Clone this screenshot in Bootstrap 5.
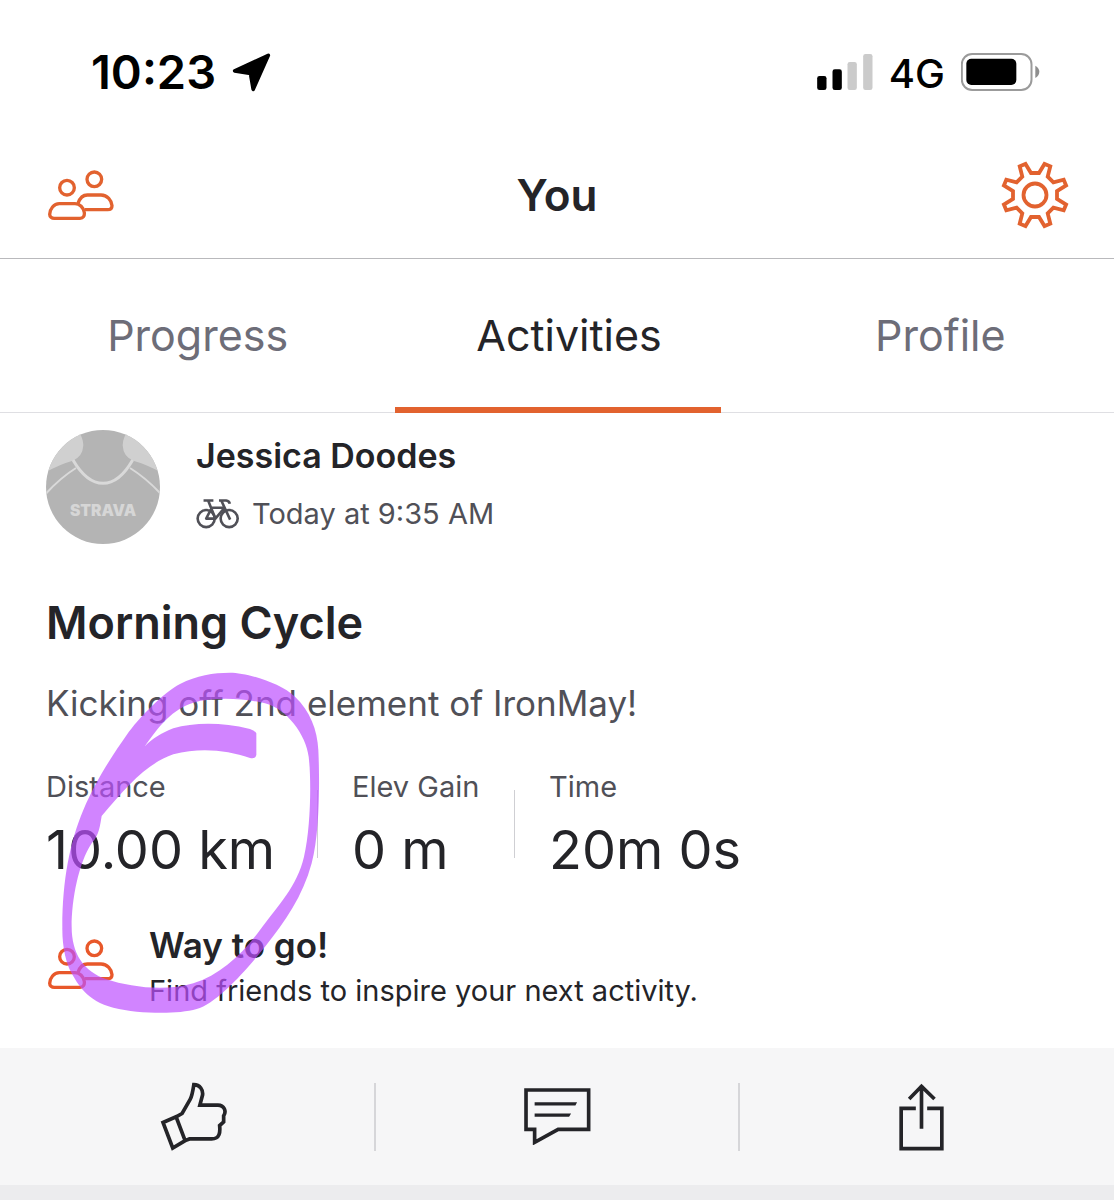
<!DOCTYPE html>
<html lang="en">
<head>
<meta charset="utf-8">
<meta name="viewport" content="width=device-width, initial-scale=1">
<title>You – Activities</title>
<link href="https://cdn.jsdelivr.net/npm/bootstrap@5.3.0/dist/css/bootstrap.min.css" rel="stylesheet">
<style>
:root{--ink:#242428;--soft:#505057;--brand:#e2622f;}
body{font-family:Inter,"Liberation Sans",sans-serif;color:var(--ink);background:#ececee;font-weight:400;}
svg{display:block;flex:none;}
.icon-btn{border:0;padding:0;background:none;color:var(--brand);}
.status{height:144px;padding:0 74px 0 91px;color:#000;}
.clock{font-size:47px;font-weight:600;line-height:56px;}
.carrier{font-size:40px;font-weight:500;line-height:48px;}
.topbar{height:115px;padding:0 44px 12px 48px;border-bottom:1px solid #b9b9bc;}
.topbar h1{font-size:44px;line-height:56px;font-weight:600;}
.tabs{height:154px;border-bottom:1px solid #dfdfe3;padding-left:12px;margin-right:-12px;}
.tabs a{flex:1 1 0;font-size:43px;line-height:56px;color:#6d6d78;text-decoration:none;text-align:center;padding-top:48px;position:relative;}
.tabs a.active{color:var(--ink);}
.tabs a.active::after{content:"";position:absolute;left:12px;right:34px;bottom:-1px;height:6px;background:var(--brand);}
.entry{padding:17px 46px 35px;}
.who{font-size:34px;line-height:44px;font-weight:600;}
.when{font-size:29px;line-height:40px;color:var(--soft);}
.entry h3{font-size:45px;line-height:56px;font-weight:600;margin:51px 0 0;}
.note{font-size:35px;line-height:44px;color:var(--soft);margin:30px 0 0;}
.stats{margin-top:42px;}
.stats dt{font-size:29px;line-height:40px;font-weight:400;color:var(--soft);}
.stats dd{font-size:54px;line-height:64px;margin:11px 0 0;}
.stat-a{width:271px;}
.stat-b{width:162px;}
.rule{width:1px;height:68px;background:#cfcfd3;margin:23px 34px 0 0;}
.cheer{margin-top:39px;gap:35px;}
.cheer svg{margin:0 0 6px 2px;}
.cheer strong{display:block;font-size:35px;line-height:48px;font-weight:600;}
.cheer span{display:block;font-size:29px;line-height:44px;}
.scribble{position:absolute;left:30px;top:247px;pointer-events:none;}
.actions{background:#f6f6f7;height:137px;}
.actions button{border:0;background:none;color:var(--ink);flex:1 1 0;height:68px;display:flex;align-items:center;justify-content:center;padding:0;}
.actions button+button{border-left:2px solid #d6d6d9;}
</style>
</head>
<body>
<svg width="0" height="0" class="position-absolute" aria-hidden="true">
  <symbol id="people" viewBox="144 418 198 150"><g fill="none" stroke="currentColor" stroke-width="10"><circle cx="201" cy="471" r="22"/><circle cx="283" cy="446" r="22"/><path d="M163 563H240C250 563 254 555 253 546C251 531 239 519 225 519H178C161 519 150 535 149 551C149 558 155 563 163 563Z"/><path d="M234 518C239 504 248 493 262 493H303C322 493 335 510 336 525C336 532 331 537 323 537H254"/></g></symbol>
</svg>
<div class="bg-white overflow-hidden">
  <div class="status d-flex justify-content-between align-items-center">
    <div class="d-flex align-items-center gap-3">
      <span class="clock">10:23</span>
      <svg width="39" height="39" viewBox="690 70 116 116"><path d="M698 123L798 77L753 178L745 131Z" stroke="#000" stroke-width="11" stroke-linejoin="round"/></svg>
    </div>
    <div class="d-flex align-items-center">
      <svg width="56" height="36" viewBox="107 72 167 108"><rect x="107" y="138" width="28" height="42" rx="7"/><rect x="153" y="118" width="28" height="62" rx="7"/><g fill="#cbcbcb"><rect x="198" y="96" width="28" height="84" rx="7"/><rect x="245" y="72" width="28" height="108" rx="7"/></g></svg>
      <span class="carrier mx-3 pt-1">4G</span>
      <svg width="79" height="38" viewBox="545 69 237 114"><rect x="547.500" y="72" width="209" height="108" rx="31" fill="none" stroke="#9b9b9b" stroke-width="6"/><rect x="561" y="86" width="150" height="79" rx="15"/><path d="M768 107Q780 114 780 125T768 144Z" fill="#8e8e8e"/></svg>
    </div>
  </div>
  <header class="topbar d-flex justify-content-between align-items-center">
    <button class="icon-btn" aria-label="Find friends"><svg width="66" height="50"><use href="#people"/></svg></button>
    <h1 class="m-0">You</h1>
    <button class="icon-btn" aria-label="Settings"><svg width="70" height="70" viewBox="-35 -35 70 70" fill="none" stroke="currentColor" stroke-width="3.800"><circle r="11.500"/><path d="M-4-22L4-22L9.500-31.100L15.300-28.700L12.700-18.400L18.400-12.700L28.700-15.300L31.100-9.500L22-4L22 4L31.100 9.500L28.700 15.300L18.400 12.700L12.700 18.400L15.300 28.700L9.500 31.100L4 22L-4 22L-9.500 31.100L-15.300 28.700L-12.700 18.400L-18.400 12.700L-28.700 15.300L-31.100 9.500L-22 4L-22-4L-31.100-9.500L-28.700-15.300L-18.400-12.700L-12.700-18.400L-15.300-28.700L-9.500-31.100Z"/></svg></button>
  </header>
  <nav class="tabs d-flex"><a href="#progress">Progress</a><a href="#activities" class="active" aria-current="page">Activities</a><a href="#profile">Profile</a></nav>

  <article class="position-relative">
    <div class="entry">
      <div class="d-flex align-items-start">
        <svg width="114" height="114" viewBox="48 59 342 342" role="img" aria-label="Profile picture">
          <clipPath id="disc"><circle cx="219" cy="230" r="171"/></clipPath>
          <g clip-path="url(#disc)"><rect x="48" y="59" width="342" height="342" fill="#b4b4b4"/><path d="M40 50H132Q160 75 160 105Q158 140 128 151Q85 163 40 190ZM400 50H306Q278 75 278 105Q280 140 310 151Q353 163 400 190Z" fill="#d0d0d0"/><g fill="none" stroke="#d9d9d9"><path d="M129 149Q170 219 219 219T308 149" stroke-width="9"/><path d="M138 173Q90 203 46 252M300 173Q348 203 394 252" stroke-width="6"/></g>
          <text x="219" y="318" text-anchor="middle" font-family="Inter,sans-serif" font-size="47" font-weight="900" fill="#d6d6d6">STRAVA</text></g>
        </svg>
        <div class="ps-1 ms-4">
          <div class="ps-2 pt-1">
          <div class="who">Jessica Doodes</div>
          <div class="when d-flex align-items-center mt-3"><svg class="me-2" width="44" height="30" viewBox="496 266 134 90" fill="none" stroke="currentColor" stroke-width="8" stroke-linejoin="round"><circle cx="527" cy="325" r="26"/><circle cx="597" cy="325" r="26"/><path d="M519 270H549M533 270L555 325H527L544 292H583L555 325M566 270H588Q597 271 599 280M573 270L600 328"/></svg><span class="ps-1">Today at 9:35 AM</span></div>
          </div>
        </div>
      </div>
      <h3>Morning Cycle</h3>
      <p class="note">Kicking off 2nd element of IronMay!</p>
      <dl class="stats d-flex mb-0">
        <div class="stat-a"><dt>Distance</dt><dd>10.00 km</dd></div>
        <div class="rule"></div>
        <div class="stat-b"><dt>Elev Gain</dt><dd>0 m</dd></div>
        <div class="rule"></div>
        <div><dt>Time</dt><dd>20m 0s</dd></div>
      </dl>
      <div class="cheer d-flex align-items-center">
        <svg width="66" height="50" color="#e8582a"><use href="#people"/></svg>
        <div><strong>Way to go!</strong><span>Find friends to inspire your next activity.</span></div>
      </div>
    </div>
    <svg class="scribble" width="320" height="370" viewBox="0 0 960 1110" aria-hidden="true"><path fill="#be50ff" fill-opacity=".7" fill-rule="evenodd" d="M97 800C97 660 120 545 160 450S255 275 290 225S400 98 450 72S550 38 600 38S750 68 795 110S862 210 865 270S872 510 845 610S765 785 705 860S560 1030 500 1047S330 1062 250 1043S142 970 125 940S96 860 97 800ZM345 258C385 200 430 145 490 128S640 114 705 130S828 225 836 290S843 500 822 590S745 735 690 810S570 945 490 970S300 982 230 958S125 880 125 800S145 610 185 550C208 525 210 495 215 468C290 380 350 310 430 283C510 262 590 270 660 294Q676 298 679 285V220Q676 212 660 207C570 185 490 188 430 205C395 218 365 238 345 258Z"/></svg>
  </article>

  <footer class="actions container-fluid d-flex align-items-center">
    <button aria-label="Give kudos"><svg width="67" height="69" viewBox="62 36 200 206" fill="none" stroke="currentColor" stroke-width="11"><path d="M71 157L110 140L137 211L100 233ZM110 140L128 130L152 88Q158 77 163 44C182 44 191 60 189 75L181 105H235C254 105 261 124 252 137V155L240 166C242 185 241 206 216 206H150L137 211"/></svg></button>
    <button aria-label="Comment"><svg width="67" height="57" viewBox="72 56 202 172" fill="none" stroke="currentColor" stroke-width="11"><path d="M78 62H267V181H175L104 220V181H78Z"/><path d="M104 99H232L227 109H104ZM104 133H214L208 143H104Z" fill="currentColor" stroke="none"/></svg></button>
    <button aria-label="Share"><svg width="45" height="68" viewBox="1201 38 134 204" fill="none" stroke="currentColor" stroke-width="11"><path d="M1251 114H1207V235H1329V114H1285M1268 45V175M1231 86L1268 48L1307 86"/></svg></button>
  </footer>
</div>
<script src="https://cdn.jsdelivr.net/npm/bootstrap@5.3.0/dist/js/bootstrap.bundle.min.js"></script>
</body>
</html>
